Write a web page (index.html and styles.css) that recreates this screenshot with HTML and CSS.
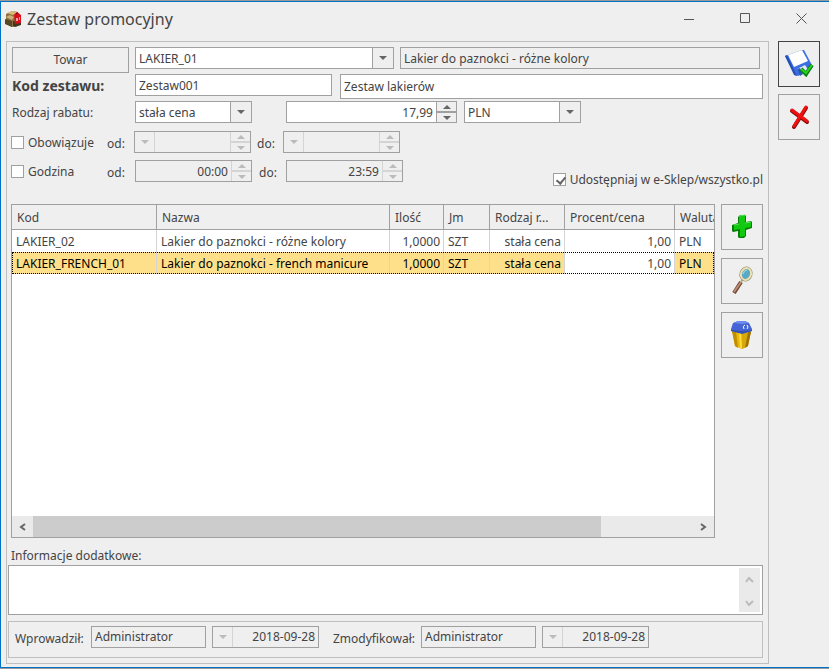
FILE: index.html
```
<!DOCTYPE html>
<html lang="pl">
<head>
	<meta charset="utf-8">
	<title>Zestaw promocyjny</title>
	<link rel="stylesheet" href="styles.css">
</head>
<body>
<div class="window">
	<header class="titlebar">
		<svg class="app-icon" width="18" height="18" viewBox="0 0 18 18">
			<path d="M1 4l6-3 6 1 1 3-1 11-6 1-6-3z" fill="#8d7140"/>
			<path d="M2 3l5-2 5 1-4 3z" fill="#d9bd7c"/>
			<path d="M0 9l7 2v6l-7-3z" fill="#5a4524"/>
			<path d="M1 7l4-2 4 2-2 3z" fill="#cbb077"/>
			<path d="M8 11l8 1v3l-6 2-2-1z" fill="#403520"/>
			<path d="M9 5l3-3 4 3v8l-6 1z" fill="#d8101c"/>
			<path d="M11 8h2v3h-2zM14 7h1v3h-1z" fill="#f2a0a0"/>
			<path d="M11 4l2-1" stroke="#6b0a10"/>
		</svg>
		<h1>Zestaw promocyjny</h1>
		<button class="win-btn" aria-label="Minimalizuj"><svg width="11" height="11"><path d="M0 6.500h10"/></svg></button>
		<button class="win-btn" aria-label="Maksymalizuj"><svg width="11" height="11"><path d="M.5.5h9v9h-9z"/></svg></button>
		<button class="win-btn" aria-label="Zamknij"><svg width="11" height="11"><path d="M.5.5l10 10M10.500.5l-10 10"/></svg></button>
	</header>

	<div class="content">
		<main class="panel">
			<!-- dane zestawu -->
			<div class="form">
				<div class="row">
					<div class="label"><button class="goods-btn">Towar</button></div>
					<div class="combo combo-wide">
						<select aria-label="Towar"><option>LAKIER_01</option></select>
					</div>
					<input class="goods-name" type="text" value="Lakier do paznokci - różne kolory" aria-label="Nazwa towaru" readonly>
				</div>
				<div class="row">
					<label class="label label-bold" for="kod">Kod zestawu:</label>
					<input class="set-code" type="text" id="kod" value="Zestaw001">
					<input class="set-name" type="text" value="Zestaw lakierów" aria-label="Nazwa zestawu">
				</div>
				<div class="row">
					<label class="label" for="rabat">Rodzaj rabatu:</label>
					<div class="combo">
						<select id="rabat"><option>stała cena</option></select>
					</div>
					<div class="field price">
						<input type="text" value="17,99" aria-label="Cena">
						<div class="spin"><button aria-label="Więcej"></button><button aria-label="Mniej"></button></div>
					</div>
					<div class="combo currency">
						<select aria-label="Waluta"><option>PLN</option></select>
					</div>
				</div>
			</div>

			<!-- okres obowiązywania -->
			<div class="period">
				<div class="period-rows">
					<div class="row date-row">
						<label class="check"><input type="checkbox">Obowiązuje</label>
						<label class="from" for="data-od">od:</label>
						<div class="field off">
							<button class="drop" aria-label="Kalendarz" disabled></button>
							<input type="text" id="data-od" disabled>
							<div class="spin"><button aria-label="Więcej" disabled></button><button aria-label="Mniej" disabled></button></div>
						</div>
						<label class="to" for="data-do">do:</label>
						<div class="field off">
							<button class="drop" aria-label="Kalendarz" disabled></button>
							<input type="text" id="data-do" disabled>
							<div class="spin"><button aria-label="Więcej" disabled></button><button aria-label="Mniej" disabled></button></div>
						</div>
					</div>
					<div class="row time-row">
						<label class="check"><input type="checkbox">Godzina</label>
						<label class="from" for="godz-od">od:</label>
						<div class="field off">
							<input type="text" id="godz-od" value="00:00" disabled>
							<div class="spin"><button aria-label="Więcej" disabled></button><button aria-label="Mniej" disabled></button></div>
						</div>
						<label class="to" for="godz-do">do:</label>
						<div class="field off">
							<input type="text" id="godz-do" value="23:59" disabled>
							<div class="spin"><button aria-label="Więcej" disabled></button><button aria-label="Mniej" disabled></button></div>
						</div>
					</div>
				</div>
				<label class="check share"><input type="checkbox" checked>Udostępniaj w e-Sklep/wszystko.pl</label>
			</div>

			<!-- pozycje zestawu -->
			<div class="items">
				<div class="grid">
					<table>
						<colgroup>
							<col class="c-code"><col class="c-name"><col class="c-qty"><col class="c-unit"><col class="c-kind"><col class="c-price"><col>
						</colgroup>
						<thead>
							<tr><th>Kod</th><th>Nazwa</th><th>Ilość</th><th>Jm</th><th>Rodzaj r...</th><th>Procent/cena</th><th>Waluta</th></tr>
						</thead>
						<tbody>
							<tr><td>LAKIER_02</td><td>Lakier do paznokci - różne kolory</td><td class="num">1,0000</td><td>SZT</td><td class="num">stała cena</td><td class="num">1,00</td><td>PLN</td></tr>
							<tr class="selected"><td>LAKIER_FRENCH_01</td><td>Lakier do paznokci - french manicure</td><td class="num">1,0000</td><td>SZT</td><td class="num">stała cena</td><td class="num active">1,00</td><td>PLN</td></tr>
						</tbody>
					</table>
					<div class="hscroll">
						<button aria-label="W lewo"><svg width="7" height="8"><path d="M6 1L2 4l4 3"/></svg></button>
						<div class="track"><div class="thumb"></div></div>
						<button aria-label="W prawo"><svg width="7" height="8"><path d="M1 1l4 3-4 3"/></svg></button>
					</div>
				</div>
				<div class="tools">
					<button class="tool" aria-label="Dodaj">
						<svg width="26" height="28" viewBox="0 0 26 28">
							<path d="M9 4l2-2h5l1 1v6l5-1 1 1v6l-6 2v6l-2 2h-5l-1-1v-6l-5 1-1-1v-6l6-2z" fill="#087d08"/>
							<path d="M10 3l6-1v8l6-1v5l-6 1v8l-5 1v-8l-6 1v-5l5-1z" fill="#10c910"/>
							<path d="M10 3l6-1M5 12l5-1M16 10l6-1" stroke="#55e655" fill="none"/>
						</svg>
					</button>
					<button class="tool" aria-label="Pokaż">
						<svg width="26" height="30" viewBox="0 0 26 30">
							<path d="M12 16l-7 11" stroke="#6d4436" stroke-width="4"/>
							<path d="M12 16l-7 10" stroke="#bd8c74" stroke-width="2"/>
							<path d="M12 16l2-3" stroke="#b8ae8c" stroke-width="2"/>
							<ellipse cx="17" cy="8" rx="5" ry="6" transform="rotate(20 17 8)" fill="#5ba9c4" stroke="#8f8663" stroke-width="3"/>
							<ellipse cx="17" cy="8" rx="5" ry="6" transform="rotate(20 17 8)" fill="#5ba9c4" stroke="#eee0b0" stroke-width="2"/>
							<path d="M14 8q1-4 4-4" stroke="#a9dcea" fill="none"/>
						</svg>
					</button>
					<button class="tool" aria-label="Usuń">
						<svg width="24" height="30" viewBox="0 0 24 30">
							<path d="M2 11h19l-3 15-6 3-7-3z" fill="#e8b80a"/>
							<path d="M2 11l4 1 2 16-3-2z" fill="#c08e00"/>
							<path d="M12 13h6l-2 14-4 2z" fill="#d8a808"/>
							<path d="M18 12h3l-3 14-3 2z" fill="#9c7200"/>
							<path d="M10 13l1 15" stroke="#ffdc3c" stroke-width="2"/>
							<path d="M1 9l2-6 5-2h7l4 2 3 6v2l-9 2-12-2z" fill="#4565d4"/>
							<path d="M4 3l4-2h7l4 2-7 1z" fill="#6c8cf0"/>
							<path d="M1 10l11 1 10-1v1l-10 3-11-3z" fill="#3450b5"/>
							<path d="M15 5q-3 1-1 4M17 5q2 2 0 4" stroke="#fff" fill="none"/>
						</svg>
					</button>
				</div>
			</div>

			<label class="notes-label" for="uwagi">Informacje dodatkowe:</label>
			<div class="notes">
				<textarea id="uwagi"></textarea>
				<div class="vscroll">
					<button aria-label="W górę" disabled><svg width="9" height="7"><path d="M1 6l3-4 4 4"/></svg></button>
					<button aria-label="W dół" disabled><svg width="9" height="7"><path d="M1 1l3 4 4-4"/></svg></button>
				</div>
			</div>

			<div class="audit">
				<label class="created" for="wprowadzil">Wprowadził:</label>
				<input class="user" type="text" id="wprowadzil" value="Administrator" readonly>
				<div class="field off day">
					<button class="drop" aria-label="Kalendarz" disabled></button>
					<input type="text" value="2018-09-28" aria-label="Data wprowadzenia" disabled>
				</div>
				<label class="changed" for="zmodyfikowal">Zmodyfikował:</label>
				<input class="user" type="text" id="zmodyfikowal" value="Administrator" readonly>
				<div class="field off day">
					<button class="drop" aria-label="Kalendarz" disabled></button>
					<input type="text" value="2018-09-28" aria-label="Data modyfikacji" disabled>
				</div>
			</div>
		</main>

		<aside class="actions">
			<button class="tool default" aria-label="Zapisz">
				<svg width="30" height="30" viewBox="0 0 30 30">
					<path d="M1 7l3-1 14-5h2l9 17-2 2-13 7-3-1z" fill="#3d6fe0"/>
					<path d="M4 6l14-5 6 11-14 6z" fill="#fff"/>
					<path d="M1 7l2-1 10 21-3-1z" fill="#2450b8"/>
					<path d="M13 20l8-4 4 6-8 4z" fill="#dfe7fa"/>
					<path d="M13 20l3-1 3 6-3 2z" fill="#2a57c4"/>
					<path d="M17 20l5 5 6-9" stroke="#0e7d10" stroke-width="4" fill="none"/>
					<path d="M17 20l5 4 6-8" stroke="#28d420" stroke-width="2" fill="none"/>
				</svg>
			</button>
			<button class="tool" aria-label="Anuluj">
				<svg width="26" height="28" viewBox="0 0 26 28">
					<path d="M6 8l15 11M20 5L8 24" stroke="#8c0c0c" stroke-width="4" stroke-linecap="round"/>
					<path d="M6 7l15 11M20 4L8 23" stroke="#f01010" stroke-width="3" stroke-linecap="round"/>
				</svg>
			</button>
		</aside>
	</div>
</div>
</body>
</html>
```
FILE: styles.css
```
* {
	margin: 0;
	padding: 0;
	box-sizing: border-box;
}

body {
	font-family: "Noto Sans", "DejaVu Sans Condensed", sans-serif;
	font-size: 12px;
	color: #444;
	background: #efefef;
}

.window {
	display: flex;
	flex-direction: column;
	min-height: 100vh;
	border: 1px solid #999;
	border-width: 1px 0;
	box-shadow: inset 1px 0 #0072c6, inset 0 1px #0072c6, inset 0 -1px #0072c6;
}

button, input, select, textarea {
	font: inherit;
	color: inherit;
	border-radius: 0;
	outline: none;
}

button {
	background: none;
	border: none;
}

/* pasek tytułu */
.titlebar {
	display: flex;
	align-items: center;
	height: 40px;
	padding: 0 0 4px 5px;
}

.titlebar h1 {
	flex: 1;
	margin-left: 4px;
	font-size: 16px;
	font-weight: normal;
}

.win-btn {
	width: 56px;
	height: 34px;
}

.win-btn path {
	fill: none;
	stroke: #555;
}

.content {
	flex: 1;
	display: flex;
	padding: 0 9px 4px 6px;
}

.panel {
	flex: 1;
	display: flex;
	flex-direction: column;
	min-width: 0;
	padding: 5px 5px 5px 1px;
	border: 1px solid #bfbfbf;
}

.actions {
	display: flex;
	flex-direction: column;
	gap: 7px;
	margin-left: 9px;
}

/* pola */
input[type="text"], .field, .combo select, .notes {
	height: 22px;
	border: 1px solid #a0a0a0;
	background: #fff;
}

input[type="text"] {
	padding: 0 3px;
	min-width: 0;
}

input[readonly] {
	background: #efefef;
}

.combo {
	position: relative;
	width: 117px;
	height: 22px;
}

.combo select {
	width: 100%;
	padding: 0 24px 0 3px;
	appearance: none;
}

.combo::before {
	content: "";
	position: absolute;
	top: 1px;
	right: 1px;
	width: 20px;
	height: 20px;
	border-left: 1px solid #a0a0a0;
	background: #efefef;
	pointer-events: none;
}

.combo::after {
	content: "";
	position: absolute;
	top: 9px;
	right: 7px;
	border: 4px solid transparent;
	border-top-color: #666;
	border-bottom: none;
	pointer-events: none;
}

.field {
	display: flex;
	width: 117px;
}

.field input[type="text"] {
	flex: 1;
	width: 0;
	height: 20px;
	border: none;
	text-align: right;
}

.field.off, .field.off input {
	background: #efefef;
}

.spin {
	display: flex;
	flex-direction: column;
	width: 20px;
	border-left: 1px solid #a0a0a0;
	background: #efefef;
}

.spin button {
	flex: 1;
	display: flex;
	align-items: center;
	justify-content: center;
}

.spin button + button {
	border-top: 2px solid #a0a0a0;
}

.spin button::before {
	content: "";
	border: 4px solid transparent;
	border-bottom-color: #666;
	border-top: none;
}

.spin button + button::before, .drop::before {
	content: "";
	border: 4px solid transparent;
	border-top-color: #666;
	border-bottom: none;
}

.drop {
	display: flex;
	align-items: center;
	justify-content: center;
	width: 20px;
	border-right: 1px solid #d4d4d4;
}

.off .spin, .off .spin button {
	border-color: #d4d4d4;
}

.off .spin button::before {
	border-bottom-color: #bbb;
}

.off .spin button + button::before, .off .drop::before {
	border-top-color: #bbb;
}

/* formularz */
.form {
	display: grid;
	grid-auto-rows: 22px;
	row-gap: 5px;
	padding-left: 3px;
}

.row {
	display: flex;
}

.label {
	width: 124px;
	padding-left: 1px;
	line-height: 24px;
}

.label-bold {
	font-size: 14px;
	font-weight: bold;
}

.goods-btn {
	width: 117px;
	height: 26px;
	border: 1px solid #a0a0a0;
}

.combo-wide {
	width: 259px;
}

.goods-name {
	flex: 1;
	margin: 0 3px 0 6px;
}

.set-code {
	width: 197px;
}

.row .set-name {
	flex: 1;
	height: 25px;
	margin-left: 8px;
}

.price {
	width: 171px;
	margin: 0 7px 0 34px;
}

.period {
	display: flex;
	justify-content: space-between;
	height: 58px;
	margin-top: 8px;
	padding-left: 3px;
}

.period-rows {
	display: grid;
	grid-auto-rows: 22px;
	row-gap: 7px;
}

.check {
	display: flex;
	align-items: center;
	gap: 4px;
	width: 96px;
}

.check input {
	position: relative;
	width: 13px;
	height: 13px;
	border: 1px solid #a0a0a0;
	background: #fff;
	appearance: none;
}

.check input:checked::before {
	content: "";
	position: absolute;
	left: 4px;
	top: 1px;
	width: 4px;
	height: 7px;
	border: solid #666;
	border-width: 0 2px 2px 0;
	transform: rotate(40deg);
}

.share {
	align-self: flex-end;
	width: auto;
	height: 19px;
	white-space: nowrap;
}

.from, .to {
	line-height: 26px;
}

.date-row .from {
	width: 27px;
}

.date-row .to {
	width: 32px;
	padding-left: 6px;
}

.time-row .from {
	width: 28px;
}

.time-row .to {
	width: 34px;
	padding-left: 7px;
}

/* tabela */
.items {
	flex: 1;
	display: flex;
	gap: 6px;
	margin-top: 15px;
	padding-left: 3px;
}

.grid {
	flex: 1;
	display: flex;
	flex-direction: column;
	justify-content: space-between;
	min-width: 0;
	border: 1px solid #a0a0a0;
	background: #fff;
}

.grid table {
	width: 100%;
	table-layout: fixed;
	border-collapse: separate;
	border-spacing: 0;
}

.c-code { width: 145px; }
.c-name { width: 233px; }
.c-qty { width: 54px; }
.c-unit { width: 46px; }
.c-kind { width: 75px; }
.c-price { width: 110px; }

.grid th, .grid td {
	overflow: hidden;
	white-space: nowrap;
	text-align: left;
	border-right: 1px solid #d4d4d4;
}

.grid th {
	height: 25px;
	padding: 0 5px;
	font-weight: normal;
	background: #efefef;
	border-right-color: #a0a0a0;
	border-bottom: 1px solid #a0a0a0;
}

.grid td {
	height: 22px;
	padding: 0 4px;
}

.grid th:last-child, .grid td:last-child {
	padding-right: 0;
	border-right: none;
}

.grid td.num {
	padding-right: 3px;
	text-align: right;
}

.grid .selected {
	color: #000;
	background: #ffe08a;
	outline: 1px dotted #000;
	outline-offset: -1px;
}

.grid td.active {
	color: #444;
	background: #fff;
}

.hscroll {
	display: flex;
	height: 21px;
	background: #eaeaea;
}

.hscroll button {
	width: 21px;
}

.hscroll path, .vscroll path {
	fill: none;
	stroke: #666;
	stroke-width: 2;
}

.track {
	flex: 1;
}

.thumb {
	width: 86%;
	height: 100%;
	background: #ccc;
}

.tools {
	display: flex;
	flex-direction: column;
	gap: 8px;
}

.tool {
	display: flex;
	align-items: center;
	justify-content: center;
	width: 42px;
	height: 46px;
	border: 1px solid #a0a0a0;
}

.tool.default {
	border-color: #444;
}

/* uwagi */
.notes-label {
	margin-top: 8px;
	padding-left: 3px;
	line-height: 19px;
}

.notes {
	display: flex;
	height: 50px;
	padding: 2px;
}

.notes textarea {
	flex: 1;
	border: none;
	resize: none;
}

.vscroll {
	display: flex;
	flex-direction: column;
	justify-content: space-between;
	width: 21px;
	background: #eaeaea;
}

.vscroll button {
	height: 20px;
}

.vscroll path {
	stroke: #bbb;
}

/* kto i kiedy */
.audit {
	display: flex;
	height: 37px;
	margin-top: 6px;
	padding: 4px 6px;
	border: 1px solid #bfbfbf;
	line-height: 26px;
}

.created {
	width: 76px;
}

.changed {
	width: 88px;
}

.user {
	width: 115px;
}

.day {
	width: 107px;
	margin: 0 14px 0 6px;
}
```
